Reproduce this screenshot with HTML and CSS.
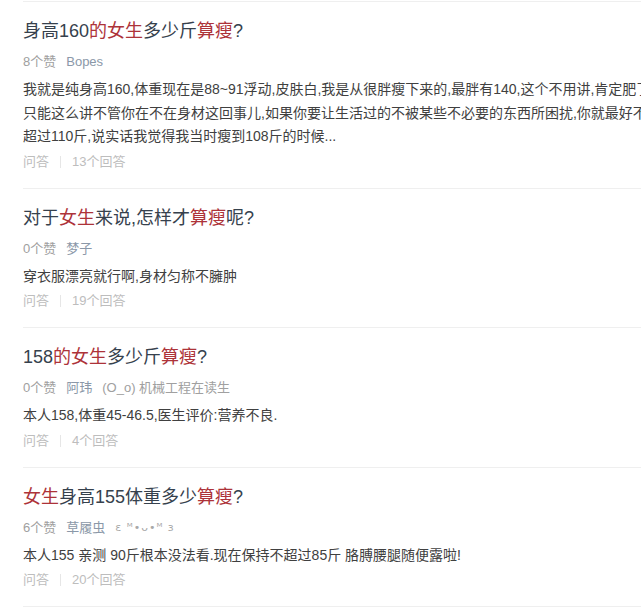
FILE: index.html
```html
<!DOCTYPE html>
<html lang="zh-CN">
  <head>
    <meta charset="utf-8" />
    <meta name="viewport" content="width=device-width, initial-scale=1.0" />
    <title>女生多少斤算瘦</title>
    <link rel="stylesheet" href="styles.css">
  </head>

  <body>
    <ul class="qa-list">
      <li class="qa-item">
        <h2 class="qa-title">身高160<span class="hl">的女生</span>多少斤<span class="hl">算瘦</span>?</h2>
        <div class="qa-meta">
          <span>8个赞</span>
          <span class="user">Bopes</span>
        </div>
        <p class="qa-body">我就是纯身高160,体重现在是88~91浮动,皮肤白,我是从很胖瘦下来的,最胖有140,这个不用讲,肯定肥了<br>只能这么讲不管你在不在身材这回事儿,如果你要让生活过的不被某些不必要的东西所困扰,你就最好不要<br>超过110斤,说实话我觉得我当时瘦到108斤的时候...</p>
        <div class="qa-foot">
          <span>问答</span>
          <span class="sep"></span>
          <span>13个回答</span>
        </div>
      </li>

      <li class="qa-item">
        <h2 class="qa-title">对于<span class="hl">女生</span>来说,怎样才<span class="hl">算瘦</span>呢?</h2>
        <div class="qa-meta">
          <span>0个赞</span>
          <span class="user">梦子</span>
        </div>
        <p class="qa-body">穿衣服漂亮就行啊,身材匀称不臃肿</p>
        <div class="qa-foot">
          <span>问答</span>
          <span class="sep"></span>
          <span>19个回答</span>
        </div>
      </li>

      <li class="qa-item">
        <h2 class="qa-title">158<span class="hl">的女生</span>多少斤<span class="hl">算瘦</span>?</h2>
        <div class="qa-meta">
          <span>0个赞</span>
          <span class="user">阿玮</span>
          <span>(O_o) 机械工程在读生</span>
        </div>
        <p class="qa-body">本人158,体重45-46.5,医生评价:营养不良.</p>
        <div class="qa-foot">
          <span>问答</span>
          <span class="sep"></span>
          <span>4个回答</span>
        </div>
      </li>

      <li class="qa-item">
        <h2 class="qa-title"><span class="hl">女生</span>身高155体重多少<span class="hl">算瘦</span>?</h2>
        <div class="qa-meta">
          <span>6个赞</span>
          <span class="user">草履虫</span>
          <span class="kaomoji">ε ᴹ•ᴗ•ᴹ з</span>
        </div>
        <p class="qa-body">本人155 亲测 90斤根本没法看.现在保持不超过85斤 胳膊腰腿随便露啦!</p>
        <div class="qa-foot">
          <span>问答</span>
          <span class="sep"></span>
          <span>20个回答</span>
        </div>
      </li>
    </ul>
  </body>
</html>
```

FILE: styles.css
```css
html,
body {
  margin: 0;
  padding: 0;
  background: #fff;
}

body {
  font-family: 'Liberation Sans', 'Noto Sans CJK SC', sans-serif;
  overflow: hidden;
}

.qa-list {
  list-style: none;
  margin: 0 0 0 23px;
  padding: 1px 0 0 0;
}

.qa-item {
  border-top: 1px solid #efefef;
  padding: 17px 0 16px;
}

.qa-item:last-child {
  border-bottom: 1px solid #efefef;
}

.qa-title {
  margin: 0;
  font-size: 18px;
  font-weight: 400;
  line-height: 24px;
  color: #36414d;
  white-space: nowrap;
}

.hl {
  color: #ad3339;
}

.qa-meta {
  display: flex;
  align-items: center;
  gap: 10px;
  margin-top: 9px;
  font-size: 13px;
  line-height: 20px;
  color: #a0a0a0;
  white-space: nowrap;
}

.qa-meta .user {
  color: #8b98a8;
}

.kaomoji {
  font-family: 'DejaVu Sans', sans-serif;
  font-size: 11px;
  color: #a8a8a8;
  letter-spacing: 1px;
}

.qa-body {
  margin: 6px 0 0;
  font-size: 14px;
  line-height: 23.5px;
  color: #404040;
  white-space: nowrap;
}

.qa-foot {
  display: flex;
  align-items: center;
  margin-top: 3px;
  font-size: 13px;
  line-height: 20px;
  color: #bdbdbd;
}

.qa-foot .sep {
  width: 1px;
  height: 12px;
  background: #e6e6e6;
  margin: 0 11px;
}
```
